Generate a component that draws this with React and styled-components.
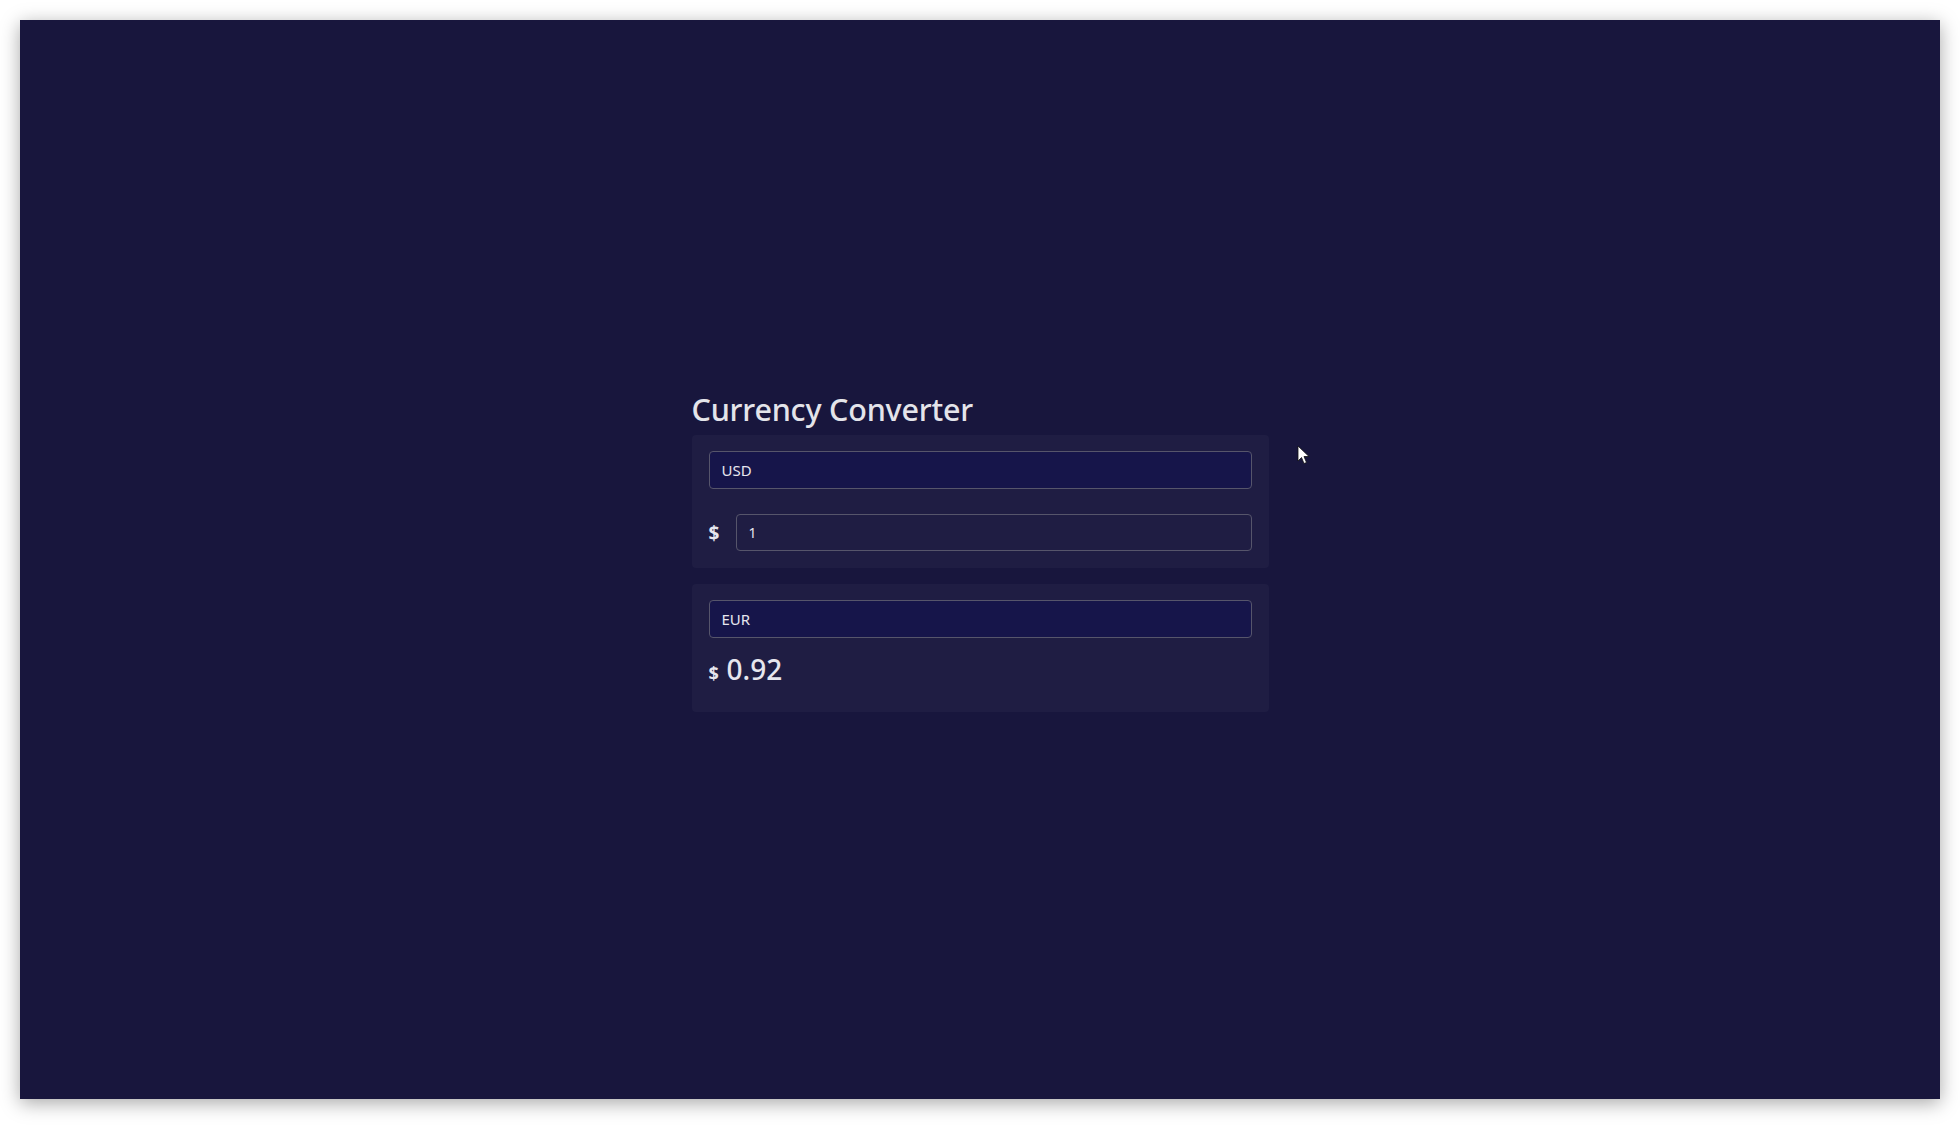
import React, { useState } from "react";
import styled, { createGlobalStyle } from "styled-components";

const GlobalStyle = createGlobalStyle`
    html, body {
        margin: 0;
        padding: 0;
        background: #ffffff;
        font-family: "Noto Sans", "Open Sans", sans-serif;
    }
    * {
        box-sizing: border-box;
    }
`;

const Screen = styled.div`
    width: 1960px;
    height: 1129px;
    padding: 20px 20px 30px 20px;
    background: #ffffff;
`;

const Frame = styled.div`
    position: relative;
    width: 1920px;
    height: 1079px;
    background: #18163d;
    box-shadow: 0 4px 18px rgba(0, 0, 0, 0.35);
    display: flex;
    align-items: center;
    justify-content: center;
    padding-bottom: 2px;
`;

const Converter = styled.div`
    width: 577px;
    display: flex;
    flex-direction: column;
`;

const Title = styled.h1`
    margin: 0 0 6px 0;
    font-size: 30.5px;
    font-weight: 500;
    line-height: 40px;
    color: #e4e4ea;
    letter-spacing: -0.2px;
`;

const Card = styled.div`
    background: #1f1d43;
    border-radius: 4px;
    padding: 16px 17px 17px 17px;
    display: flex;
    flex-direction: column;
    gap: ${(p) => p.gap || 25}px;
    margin-bottom: 16px;
`;

const Select = styled.div`
    height: 38px;
    border: 1px solid #56556b;
    border-radius: 4px;
    background: #16154a;
    color: #e6e6ee;
    font-size: 15px;
    display: flex;
    align-items: center;
    padding: 0 12px;
`;

const Row = styled.div`
    display: flex;
    align-items: center;
    gap: 16px;
`;

const Symbol = styled.span`
    color: #e6e6ee;
    font-size: ${(p) => p.size || 19}px;
    font-weight: 700;
    width: 11px;
`;

const AmountInput = styled.input`
    flex: 1;
    height: 37px;
    border: 1px solid #56556b;
    border-radius: 4px;
    background: transparent;
    color: #e6e6ee;
    font-family: inherit;
    font-size: 14px;
    padding: 0 12px;
    outline: none;
`;

const Result = styled.div`
    display: flex;
    align-items: baseline;
    gap: 7px;
    color: #e6e6ee;
    line-height: 43px;
`;

const ResultValue = styled.span`
    font-size: 28px;
    font-weight: 500;
`;

const Pointer = styled.svg`
    position: absolute;
    left: 1277px;
    top: 425px;
`;

export default function App() {
    const [amount, setAmount] = useState("1");

    return (
        <>
            <GlobalStyle />
            <Screen>
                <Frame>
                    <Converter>
                        <Title>Currency Converter</Title>
                        <Card gap={25}>
                            <Select>USD</Select>
                            <Row>
                                <Symbol>$</Symbol>
                                <AmountInput value={amount} onChange={(e) => setAmount(e.target.value)} />
                            </Row>
                        </Card>
                        <Card gap={10}>
                            <Select>EUR</Select>
                            <Result>
                                <Symbol size={18}>$</Symbol>
                                <ResultValue>{(Number(amount || 0) * 0.92).toFixed(2)}</ResultValue>
                            </Result>
                        </Card>
                    </Converter>
                    <Pointer width="14" height="20" viewBox="0 0 14 20">
                        <path d="M1 1 L1 16 L4.5 12.5 L7 18.5 L9.5 17.5 L7 11.5 L12 11.5 Z" fill="#ffffff" stroke="#111" strokeWidth="0.8" />
                    </Pointer>
                </Frame>
            </Screen>
        </>
    );
}
